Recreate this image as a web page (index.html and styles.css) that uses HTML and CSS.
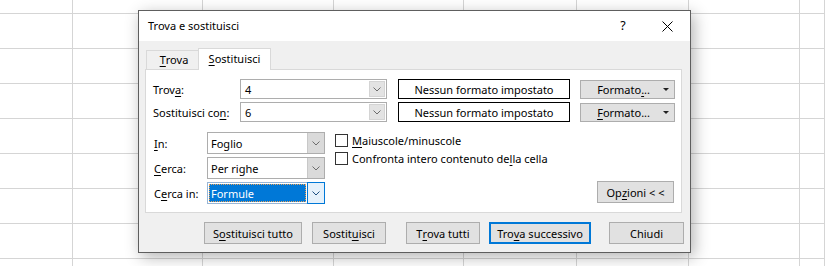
FILE: index.html
```html
<!DOCTYPE html>
<html lang="it">
<head>
<meta charset="utf-8">
<title>Trova e sostituisci</title>
<link rel="stylesheet" href="styles.css">
</head>
<body>
<div class="sheet">
  <div class="grid">
    <div class="cell"></div><div class="cell"></div><div class="cell"></div><div class="cell"></div><div class="cell"></div><div class="cell"></div><div class="cell"></div><div class="cell"></div>
    <div class="cell"></div><div class="cell"></div><div class="cell"></div><div class="cell"></div><div class="cell"></div><div class="cell"></div><div class="cell"></div><div class="cell"></div>
    <div class="cell"></div><div class="cell"></div><div class="cell"></div><div class="cell"></div><div class="cell"></div><div class="cell"></div><div class="cell"></div><div class="cell"></div>
    <div class="cell"></div><div class="cell"></div><div class="cell"></div><div class="cell"></div><div class="cell"></div><div class="cell"></div><div class="cell"></div><div class="cell"></div>
    <div class="cell"></div><div class="cell"></div><div class="cell"></div><div class="cell"></div><div class="cell"></div><div class="cell"></div><div class="cell"></div><div class="cell"></div>
    <div class="cell"></div><div class="cell"></div><div class="cell"></div><div class="cell"></div><div class="cell"></div><div class="cell"></div><div class="cell"></div><div class="cell"></div>
    <div class="cell"></div><div class="cell"></div><div class="cell"></div><div class="cell"></div><div class="cell"></div><div class="cell"></div><div class="cell"></div><div class="cell"></div>
    <div class="cell"></div><div class="cell"></div><div class="cell"></div><div class="cell"></div><div class="cell"></div><div class="cell"></div><div class="cell"></div><div class="cell"></div>
    <div class="cell"></div><div class="cell"></div><div class="cell"></div><div class="cell"></div><div class="cell"></div><div class="cell"></div><div class="cell"></div><div class="cell"></div>
  </div>

  <div class="dialog">
    <div class="titlebar">
      <span class="title">Trova e sostituisci</span>
      <span class="help">?</span>
      <span class="close">
        <svg width="11" height="11" viewBox="0 0 11 11"><path d="M0.5 0.5 L10.5 10.5 M10.5 0.5 L0.5 10.5" stroke="#000" stroke-width="1" fill="none"/></svg>
      </span>
    </div>

    <div class="body">
      <div class="tabs">
        <div class="tab"><u>T</u>rova</div>
        <div class="tab active"><u>S</u>ostituisci</div>
      </div>

      <div class="panel">
        <div class="fields">
          <div class="row">
            <span class="label">Trov<u>a</u>:</span>
            <div class="combo">
              <span class="value">4</span>
              <span class="drop"><svg width="8" height="5" viewBox="0 0 8 5"><path d="M0.5 0.5 L4 4 L7.5 0.5" stroke="#6d6d6d" fill="none"/></svg></span>
            </div>
            <div class="fmtbox">Nessun formato impostato</div>
            <div class="btn fmtbtn"><span>Formato<u>.</u>..</span><span class="tri"></span></div>
          </div>
          <div class="row">
            <span class="label">Sostituisci co<u>n</u>:</span>
            <div class="combo">
              <span class="value">6</span>
              <span class="drop"><svg width="8" height="5" viewBox="0 0 8 5"><path d="M0.5 0.5 L4 4 L7.5 0.5" stroke="#6d6d6d" fill="none"/></svg></span>
            </div>
            <div class="fmtbox">Nessun formato impostato</div>
            <div class="btn fmtbtn"><span><u>F</u>ormato...</span><span class="tri"></span></div>
          </div>
        </div>

        <div class="options">
          <div class="selects">
            <div class="srow">
              <span class="slabel"><u>I</u>n:</span>
              <div class="select">
                <span class="value">Foglio</span>
                <span class="drop"><svg width="8" height="5" viewBox="0 0 8 5"><path d="M0.5 0.5 L4 4 L7.5 0.5" stroke="#6d6d6d" fill="none"/></svg></span>
              </div>
            </div>
            <div class="srow">
              <span class="slabel"><u>C</u>erca:</span>
              <div class="select">
                <span class="value">Per righe</span>
                <span class="drop"><svg width="8" height="5" viewBox="0 0 8 5"><path d="M0.5 0.5 L4 4 L7.5 0.5" stroke="#6d6d6d" fill="none"/></svg></span>
              </div>
            </div>
            <div class="srow">
              <span class="slabel">C<u>e</u>rca in:</span>
              <div class="select focused">
                <span class="value"><span class="hl">Formule</span></span>
                <span class="drop"><svg width="8" height="5" viewBox="0 0 8 5"><path d="M0.5 0.5 L4 4 L7.5 0.5" stroke="#1d4f80" fill="none"/></svg></span>
              </div>
            </div>
          </div>

          <div class="checks">
            <label class="check"><span class="box"></span><span><u>M</u>aiuscole/minuscole</span></label>
            <label class="check"><span class="box"></span><span>Confronta intero contenuto de<u>l</u>la cella</span></label>
          </div>

          <div class="btn opts">Op<u>z</u>ioni &lt; &lt;</div>
        </div>
      </div>

      <div class="buttons">
        <div class="btn b-all">S<u>o</u>stituisci tutto</div>
        <div class="btn b-one">Sostit<u>u</u>isci</div>
        <div class="btn b-findall">T<u>r</u>ova tutti</div>
        <div class="btn b-next default">Tro<u>v</u>a successivo</div>
        <div class="btn b-close">Chiudi</div>
      </div>
    </div>
  </div>
</div>
</body>
</html>
```

FILE: styles.css
```css
* { box-sizing: border-box; }

html, body {
  margin: 0;
  padding: 0;
  background: #ffffff;
}

body {
  font-family: "Noto Sans", "Open Sans", sans-serif;
  font-size: 11px;
  color: #000;
}

u {
  text-decoration: underline;
  text-underline-offset: 2px;
  text-decoration-thickness: 1px;
}

.sheet {
  position: relative;
  width: 825px;
  height: 266px;
  overflow: hidden;
}

/* spreadsheet grid */
.grid {
  display: grid;
  grid-template-columns: 73px 130px 131px 130px 113px 112px 111px 1fr;
  grid-template-rows: 14px repeat(8, 35px);
}

.cell {
  border-right: 1px solid #d5d5d5;
  border-bottom: 1px solid #d5d5d5;
}

/* dialog window */
.dialog {
  position: absolute;
  left: 138px;
  top: 10px;
  width: 553px;
  height: 243px;
  border: 1px solid #5e5e5e;
  background: #f0f0f0;
  box-shadow: 3px 4px 15px rgba(0, 0, 0, 0.3);
  display: flex;
  flex-direction: column;
}

.titlebar {
  height: 30px;
  background: #ffffff;
  display: flex;
  align-items: center;
  padding-left: 9px;
  flex: none;
}

.title {
  font-size: 11px;
  flex: 1;
  padding-bottom: 1px;
}

.help {
  width: 44px;
  text-align: center;
  font-size: 12.5px;
  padding-bottom: 1px;
}

.close {
  width: 45px;
  display: flex;
  justify-content: center;
  align-items: center;
}

.body {
  flex: 1;
  padding: 7px 8px 0 6px;
  display: flex;
  flex-direction: column;
}

/* tabs */
.tabs {
  display: flex;
  align-items: flex-end;
  height: 22px;
  margin-bottom: -1px;
  position: relative;
  z-index: 1;
}

.tab {
  height: 19px;
  width: 52px;
  margin-left: 1px;
  margin-bottom: 1px;
  border-top: 1px solid #d9d9d9;
  border-left: 1px solid #d9d9d9;
  background: #f0f0f0;
  display: flex;
  align-items: center;
  justify-content: center;
  padding-left: 3px;
  padding-bottom: 1px;
}

.tab.active {
  height: 22px;
  width: 73px;
  margin-left: 0;
  margin-bottom: 0;
  border: 1px solid #d9d9d9;
  border-bottom: none;
  background: #ffffff;
  padding-left: 0;
  padding-bottom: 3px;
}

/* panel */
.panel {
  height: 144px;
  border: 1px solid #d9d9d9;
  background: #ffffff;
  padding: 9px 7px 0 7px;
  display: flex;
  flex-direction: column;
}

.fields {
  display: flex;
  flex-direction: column;
  gap: 3px;
}

.row {
  display: flex;
  align-items: center;
  height: 20px;
}

.label {
  width: 87px;
  flex: none;
}

.combo {
  width: 147px;
  height: 20px;
  border: 1px solid #adadad;
  background: #fff;
  display: flex;
  flex: none;
}

.value {
  flex: 1;
  padding-left: 4px;
  display: flex;
  align-items: center;
}

.combo .drop {
  width: 16px;
  margin: 1px;
  margin-left: 0;
  background: #e3e3e3;
  border: 1px solid #d4d4d4;
  display: flex;
  align-items: center;
  justify-content: center;
}

.fmtbox {
  width: 172px;
  height: 20px;
  margin-left: 11px;
  border: 1px solid #000;
  background: #fff;
  display: flex;
  align-items: center;
  justify-content: center;
  flex: none;
}

.btn {
  background: #e1e1e1;
  border: 1px solid #adadad;
  display: flex;
  align-items: center;
  justify-content: center;
  flex: none;
}

.fmtbtn {
  width: 95px;
  height: 19px;
  margin-left: 10px;
  justify-content: flex-end;
  padding-right: 5px;
  gap: 13px;
}

.tri {
  width: 0;
  height: 0;
  border-left: 3px solid transparent;
  border-right: 3px solid transparent;
  border-top: 3px solid #222;
  margin-top: 1px;
}

/* options block */
.options {
  display: flex;
  margin-top: 10px;
}

.selects {
  display: flex;
  flex-direction: column;
  gap: 3px;
  padding-left: 1px;
}

.srow {
  display: flex;
  align-items: center;
  height: 22px;
}

.slabel {
  width: 53px;
  flex: none;
}

.select {
  width: 118px;
  height: 22px;
  border: 1px solid #adadad;
  background: #fff;
  display: flex;
}

.select .value {
  padding-left: 3px;
}

.select .drop {
  width: 17px;
  background: #dadada;
  border-left: 1px solid #c8c8c8;
  display: flex;
  align-items: center;
  justify-content: center;
}

.select.focused {
  border-color: #98b6d6;
}

.select.focused .value {
  padding: 1px;
}

.hl {
  flex: 1;
  height: 100%;
  background: #0078d7;
  color: #fff;
  border: 1px dotted #e9a25a;
  display: flex;
  align-items: center;
  padding-left: 1px;
}

.select.focused .drop {
  background: #e5f1fb;
  border: 1px solid #0078d7;
  margin: -1px -1px -1px 0;
  width: 18px;
}

.checks {
  display: flex;
  flex-direction: column;
  gap: 5px;
  margin-left: 10px;
  padding-top: 2px;
  flex: 1;
}

.check {
  display: flex;
  align-items: center;
  gap: 4px;
  height: 13px;
}

.box {
  width: 13px;
  height: 13px;
  border: 1px solid #333;
  background: #fff;
  flex: none;
}

.opts {
  width: 77px;
  height: 22px;
  align-self: flex-end;
  margin-bottom: 1px;
}

/* bottom buttons */
.buttons {
  display: flex;
  margin-top: 9px;
  padding-left: 59px;
}

.buttons .btn {
  height: 22px;
}

.b-all { width: 98px; }
.b-one { width: 74px; margin-left: 10px; }
.b-findall { width: 74px; margin-left: 20px; }
.b-next { width: 102px; margin-left: 9px; }
.b-close { width: 75px; margin-left: 18px; }

.btn.default {
  border: 2px solid #0078d7;
}
```
